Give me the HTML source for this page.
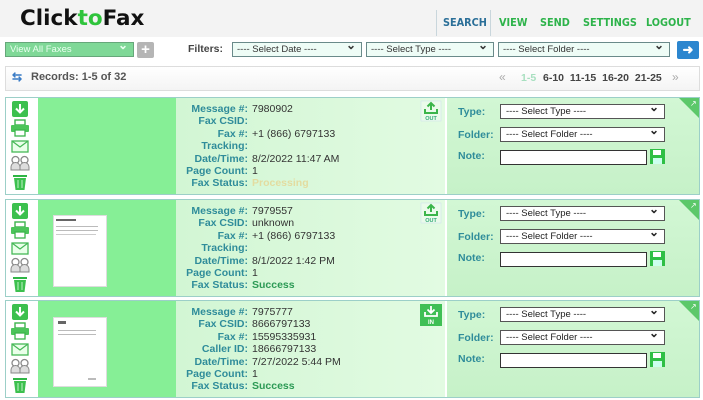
<!DOCTYPE html>
<html><head><meta charset="utf-8"><style>
*{margin:0;padding:0;box-sizing:border-box}
body{width:703px;height:400px;overflow:hidden;background:#fff;font-family:"Liberation Sans",Arial,sans-serif;position:relative}
.a{position:absolute}
.hdr{left:0;top:0;width:703px;height:37px;background:#f3f3f3}
.logo{left:20px;top:6px;font-size:21.5px;font-weight:bold;color:#111;font-family:"DejaVu Sans","Liberation Sans",sans-serif}
.nav{top:16px;font-size:10.8px;font-weight:bold;color:#2db34a;font-family:"DejaVu Sans Condensed","DejaVu Sans",sans-serif}
.sel{height:15px;border:1px solid #6a8a8a;background:#eefcf6;font-size:9.5px;color:#333;padding-left:4px;line-height:13px}
.sel:after{content:"⌄";position:absolute;right:5px;top:-4px;font-size:12px;font-weight:bold}
.card{left:5px;width:695px;height:98px;border:1px solid #9ccfc8;background:#fff}
.thumb{background:#86ef96}
.info{background:linear-gradient(90deg,#d2f6d4,#e2fbe2)}
.rp{background:linear-gradient(180deg,#d2f7d4,#c6f1c8)}
.lb{font-size:10.5px;font-weight:bold;color:#2f8c9a;text-align:right;width:100px;line-height:12.4px}
.vl{font-size:10.5px;color:#333;line-height:12.4px}
.rl{font-size:10.5px;font-weight:bold;color:#2f8c9a}
.s2{height:15px;border:1px solid #555;background:#fff;font-size:9.5px;color:#222;padding-left:5px;line-height:13px}
.s2:after{content:"⌄";position:absolute;right:5px;top:-4px;font-size:12px;font-weight:bold}
.doc{background:#fff;border:1px solid #ddd}
</style></head><body>
<div class="a hdr"></div>
<div class="a logo">Click<span style="color:#2fc43c">to</span>Fax</div>
<div class="a" style="left:436px;top:10px;width:1px;height:26px;background:#c9d6dc"></div>
<div class="a" style="left:490px;top:10px;width:1px;height:26px;background:#c9d6dc"></div>
<div class="a nav" style="left:443px;color:#2b6f98">SEARCH</div>
<div class="a nav" style="left:499px">VIEW</div>
<div class="a nav" style="left:540px">SEND</div>
<div class="a nav" style="left:583px">SETTINGS</div>
<div class="a nav" style="left:646px">LOGOUT</div>

<div class="a sel" style="left:5px;top:42px;width:129px;background:#7fd897;color:#eafff0;border-color:#66a77a">View All Faxes</div>
<div class="a" style="left:137px;top:42px;width:17px;height:16px;background:#b5b5b5;border-radius:2px;color:#fff;font-weight:bold;font-size:15px;text-align:center;line-height:15px">+</div>
<div class="a" style="left:188px;top:43px;font-size:10.5px;font-weight:bold;color:#444">Filters:</div>
<div class="a sel" style="left:232px;top:42px;width:130px">---- Select Date ----</div>
<div class="a sel" style="left:366px;top:42px;width:128px">---- Select Type ----</div>
<div class="a sel" style="left:498px;top:42px;width:172px">---- Select Folder ----</div>
<div class="a" style="left:677px;top:41px;width:22px;height:18px;background:#2c86cf;border-radius:2px;color:#fff;font-size:13px;text-align:center;line-height:17px;font-weight:bold">➜</div>

<div class="a" style="left:5px;top:66px;width:695px;height:25px;border:1px solid #ddd;background:linear-gradient(#fff,#f4f4f4)"></div>
<div class="a" style="left:12px;top:70px;font-size:12px;color:#3a7cc6;font-weight:bold">⇆</div>
<div class="a" style="left:31px;top:71px;font-size:11px;font-weight:bold;color:#555">Records: 1-5 of 32</div>
<div class="a" style="left:499px;top:70px;font-size:12px;color:#aaa">«</div>
<div class="a" style="left:521px;top:72px;font-size:10.5px;font-weight:bold;color:#a8e0c0">1-5</div>
<div class="a" style="left:543px;top:72px;font-size:10.5px;font-weight:bold;color:#444;word-spacing:3px">6-10 11-15 16-20 21-25</div>
<div class="a" style="left:672px;top:70px;font-size:12px;color:#aaa">»</div>

<!-- Card 1 -->
<div class="a card" style="top:97px"></div>
<div class="a thumb" style="left:38px;top:98px;width:138px;height:96px"></div>
<div class="a info" style="left:176px;top:98px;width:269px;height:96px"></div>
<div class="a rp" style="left:447px;top:98px;width:252px;height:96px"></div>
<div class="a" style="left:679px;top:98px;width:0;height:0;border-left:20px solid transparent;border-top:20px solid #5cc86a"></div>
<div class="a" style="left:690px;top:99px;font-size:8px;color:#fff">↗</div>

<!-- Card 2 -->
<div class="a card" style="top:199px"></div>
<div class="a thumb" style="left:38px;top:200px;width:138px;height:96px"></div>
<div class="a info" style="left:176px;top:200px;width:269px;height:96px"></div>
<div class="a rp" style="left:447px;top:200px;width:252px;height:96px"></div>
<div class="a" style="left:679px;top:200px;width:0;height:0;border-left:20px solid transparent;border-top:20px solid #5cc86a"></div>
<div class="a" style="left:690px;top:201px;font-size:8px;color:#fff">↗</div>
<div class="a doc" style="left:53px;top:215px;width:54px;height:72px"></div>
<div class="a" style="left:56px;top:219px;width:20px;height:2px;background:#666"></div>
<div class="a" style="left:56px;top:226px;width:42px;height:1px;background:#bbb"></div>
<div class="a" style="left:56px;top:230px;width:42px;height:1px;background:#bbb"></div>
<div class="a" style="left:56px;top:234px;width:40px;height:1px;background:#ccc"></div>

<!-- Card 3 -->
<div class="a card" style="top:300px"></div>
<div class="a thumb" style="left:38px;top:301px;width:138px;height:96px"></div>
<div class="a info" style="left:176px;top:301px;width:269px;height:96px"></div>
<div class="a rp" style="left:447px;top:301px;width:252px;height:96px"></div>
<div class="a" style="left:679px;top:301px;width:0;height:0;border-left:20px solid transparent;border-top:20px solid #5cc86a"></div>
<div class="a" style="left:690px;top:302px;font-size:8px;color:#fff">↗</div>
<div class="a doc" style="left:53px;top:317px;width:54px;height:70px"></div>
<div class="a" style="left:58px;top:321px;width:8px;height:3px;background:#666"></div>
<div class="a" style="left:58px;top:330px;width:38px;height:1px;background:#bbb"></div>
<div class="a" style="left:58px;top:334px;width:38px;height:1px;background:#bbb"></div>
<div class="a" style="left:88px;top:378px;width:8px;height:2px;background:#bbb"></div>

<svg class="a" style="left:0;top:0" width="703" height="400">
<defs>
<g id="ic">
 <rect x="12" y="4" width="16" height="16" rx="2" fill="#3cc04e"/>
 <path d="M20 7v8M16 11.5l4 4 4-4" stroke="#fff" stroke-width="2" fill="none"/>
 <rect x="15" y="23" width="10" height="5" fill="none" stroke="#3cb44c" stroke-width="1.4"/>
 <rect x="11" y="28" width="18" height="7" rx="1" fill="#4cc45a"/>
 <rect x="15" y="33" width="10" height="6" fill="#fff" stroke="#3cb44c" stroke-width="1.3"/>
 <rect x="12" y="44" width="16" height="11" fill="#eaffea" stroke="#46b857" stroke-width="1.3"/>
 <path d="M12 44l8 6 8-6" stroke="#46b857" stroke-width="1.2" fill="none"/>
 <circle cx="15.5" cy="63" r="3.5" fill="none" stroke="#888" stroke-width="1.3"/>
 <circle cx="24.5" cy="63" r="3.5" fill="none" stroke="#888" stroke-width="1.3"/>
 <path d="M11 73v-3a4 4 0 0 1 9 0v3zM20 73v-3a4 4 0 0 1 9 0v3z" fill="#ddd" stroke="#888" stroke-width="1"/>
 <rect x="13" y="78" width="14" height="2" fill="#2fb545"/>
 <path d="M14 81h12l-1.5 12h-9z" fill="#3cc04e"/>
 <path d="M18 83v8M22 83v8" stroke="#bff0c5" stroke-width="1"/>
</g>
<g id="sv">
 <rect x="0" y="0" width="15" height="15" fill="#2fbf45"/>
 <rect x="3" y="1" width="8" height="5" fill="#fff"/>
 <rect x="3" y="9" width="9" height="6" fill="#cfe"/>
</g>
</defs>
<use href="#ic" y="97"/>
<use href="#ic" y="199"/>
<use href="#ic" y="300"/>
<use href="#sv" x="650" y="149"/>
<use href="#sv" x="650" y="251"/>
<use href="#sv" x="650" y="352"/>
<g>
 <rect x="421" y="101" width="20" height="20" fill="#eafbea" stroke="#cde" stroke-width="0.5"/>
 <path d="M431 103v7M427.5 106.5l3.5-3.5 3.5 3.5M425 109v4h12v-4" stroke="#3bb54a" stroke-width="2" fill="none"/>
 <text x="431" y="120" font-size="5.5" fill="#3a7" text-anchor="middle" font-family="Liberation Sans" font-weight="bold">OUT</text>
 <rect x="421" y="203" width="20" height="20" fill="#eafbea" stroke="#cde" stroke-width="0.5"/>
 <path d="M431 205v7M427.5 208.5l3.5-3.5 3.5 3.5M425 211v4h12v-4" stroke="#3bb54a" stroke-width="2" fill="none"/>
 <text x="431" y="222" font-size="5.5" fill="#3a7" text-anchor="middle" font-family="Liberation Sans" font-weight="bold">OUT</text>
 <rect x="420" y="304" width="22" height="22" fill="#3fbf55"/>
 <path d="M431 306v7M427.5 309.5l3.5 3.5 3.5-3.5M425 312v4h12v-4" stroke="#fff" stroke-width="1.8" fill="none"/>
 <text x="431" y="324" font-size="6" fill="#fff" text-anchor="middle" font-family="Liberation Sans" font-weight="bold">IN</text>
</g>
</svg>

<div class="a lb" style="left:148px;top:103px">Message #:<br>Fax CSID:<br>Fax #:<br>Tracking:<br>Date/Time:<br>Page Count:<br>Fax Status:</div>
<div class="a vl" style="left:252px;top:103px">7980902<br>&nbsp;<br>+1 (866) 6797133<br>&nbsp;<br>8/2/2022 11:47 AM<br>1<br><b style="color:#e3dca0">Processing</b></div>
<div class="a lb" style="left:148px;top:205px">Message #:<br>Fax CSID:<br>Fax #:<br>Tracking:<br>Date/Time:<br>Page Count:<br>Fax Status:</div>
<div class="a vl" style="left:252px;top:205px">7979557<br>unknown<br>+1 (866) 6797133<br>&nbsp;<br>8/1/2022 1:42 PM<br>1<br><b style="color:#2c9a55">Success</b></div>
<div class="a lb" style="left:148px;top:306px">Message #:<br>Fax CSID:<br>Fax #:<br>Caller ID:<br>Date/Time:<br>Page Count:<br>Fax Status:</div>
<div class="a vl" style="left:252px;top:306px">7975777<br>8666797133<br>15595335931<br>18666797133<br>7/27/2022 5:44 PM<br>1<br><b style="color:#2c9a55">Success</b></div>

<div class="a rl" style="left:458px;top:106px">Type:</div>
<div class="a rl" style="left:458px;top:129px">Folder:</div>
<div class="a rl" style="left:458px;top:150px">Note:</div>
<div class="a s2" style="left:500px;top:104px;width:165px">---- Select Type ----</div>
<div class="a s2" style="left:500px;top:127px;width:165px">---- Select Folder ----</div>
<div class="a" style="left:500px;top:150px;width:147px;height:15px;border:1.5px solid #333;background:#fff"></div>

<div class="a rl" style="left:458px;top:208px">Type:</div>
<div class="a rl" style="left:458px;top:231px">Folder:</div>
<div class="a rl" style="left:458px;top:252px">Note:</div>
<div class="a s2" style="left:500px;top:206px;width:165px">---- Select Type ----</div>
<div class="a s2" style="left:500px;top:229px;width:165px">---- Select Folder ----</div>
<div class="a" style="left:500px;top:252px;width:147px;height:15px;border:1.5px solid #333;background:#fff"></div>

<div class="a rl" style="left:458px;top:309px">Type:</div>
<div class="a rl" style="left:458px;top:332px">Folder:</div>
<div class="a rl" style="left:458px;top:353px">Note:</div>
<div class="a s2" style="left:500px;top:307px;width:165px">---- Select Type ----</div>
<div class="a s2" style="left:500px;top:330px;width:165px">---- Select Folder ----</div>
<div class="a" style="left:500px;top:353px;width:147px;height:15px;border:1.5px solid #333;background:#fff"></div>
</body></html>
